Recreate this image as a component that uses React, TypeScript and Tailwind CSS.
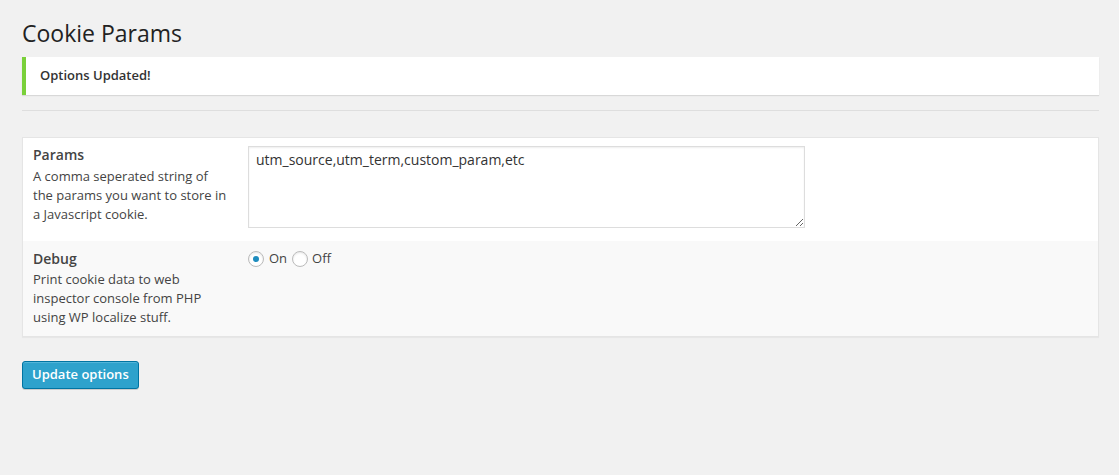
import { useState } from "react";

const OptionsPage = () => {
  const [params, setParams] = useState("utm_source,utm_term,custom_param,etc");
  const [debug, setDebug] = useState("on");

  return (
    <div className="min-h-[475px] bg-[#f1f1f1] font-['Open_Sans',sans-serif] text-[#444] pl-[22px] pr-[20px]">
      <h2 className="pt-[19px] text-[23px] leading-[29px] text-[#222] font-normal">
        Cookie Params
      </h2>

      <div className="mt-[9px] bg-white border-l-4 border-[#7ad03a] shadow-[0_1px_1px_0_rgba(0,0,0,0.1)] h-[38px] flex items-center pl-[14px]">
        <p className="text-[13px] font-semibold text-[#333]">Options Updated!</p>
      </div>

      <hr className="mt-[15px] border-0 border-t border-[#dedede]" />

      <form onSubmit={(e) => e.preventDefault()}>
        <div className="mt-[26px] border border-[#e5e5e5] shadow-[0_1px_1px_rgba(0,0,0,0.04)]">
          <div className="flex bg-white pb-[13px]">
            <div className="w-[215px] shrink-0 pl-[10px] pt-[7px]">
              <div className="text-[14px] font-semibold leading-[19px] text-[#444]">Params</div>
              <p className="mt-[3px] w-[196px] text-[13px] leading-[19px] text-[#444]">
                A comma seperated string of the params you want to store in a Javascript cookie.
              </p>
            </div>
            <div className="pl-[10px] pt-[8px]">
              <textarea
                value={params}
                onChange={(e) => setParams(e.target.value)}
                className="block w-[557px] h-[82px] border border-[#ddd] shadow-[inset_0_1px_2px_rgba(0,0,0,0.07)] bg-white px-[7px] py-[3px] text-[14px] leading-[19px] text-[#333] outline-none"
              />
            </div>
          </div>

          <div className="flex bg-[#f9f9f9] pb-[9px]">
            <div className="w-[215px] shrink-0 pl-[10px] pt-[8px]">
              <div className="text-[14px] font-semibold leading-[19px] text-[#444]">Debug</div>
              <p className="mt-[2px] w-[196px] text-[13px] leading-[19px] text-[#444]">
                Print cookie data to web inspector console from PHP using WP localize stuff.
              </p>
            </div>
            <div className="pl-[10px] pt-[8px] flex items-center h-[27px] text-[13px] text-[#444]">
              <label className="flex items-center cursor-pointer">
                <span
                  onClick={() => setDebug("on")}
                  className="w-[16px] h-[16px] rounded-full border border-[#bbb] bg-white shadow-[inset_0_1px_2px_rgba(0,0,0,0.1)] flex items-center justify-center"
                >
                  {debug === "on" && <span className="w-[6px] h-[6px] rounded-full bg-[#1e8cbe]" />}
                </span>
                <span className="ml-[5px]">On</span>
              </label>
              <label className="flex items-center cursor-pointer ml-[5px]">
                <span
                  onClick={() => setDebug("off")}
                  className="w-[16px] h-[16px] rounded-full border border-[#bbb] bg-white shadow-[inset_0_1px_2px_rgba(0,0,0,0.1)] flex items-center justify-center"
                >
                  {debug === "off" && <span className="w-[6px] h-[6px] rounded-full bg-[#1e8cbe]" />}
                </span>
                <span className="ml-[4px]">Off</span>
              </label>
            </div>
          </div>
        </div>

        <button
          type="submit"
          className="mt-[24px] h-[28px] px-[9px] rounded-[3px] bg-[#2ea2cc] border border-[#0074a2] shadow-[inset_0_1px_0_rgba(120,200,230,0.5),0_1px_0_rgba(0,0,0,0.15)] text-white text-[13px] font-semibold"
        >
          Update options
        </button>
      </form>
    </div>
  );
};

export default function App() {
  return <OptionsPage />;
}
